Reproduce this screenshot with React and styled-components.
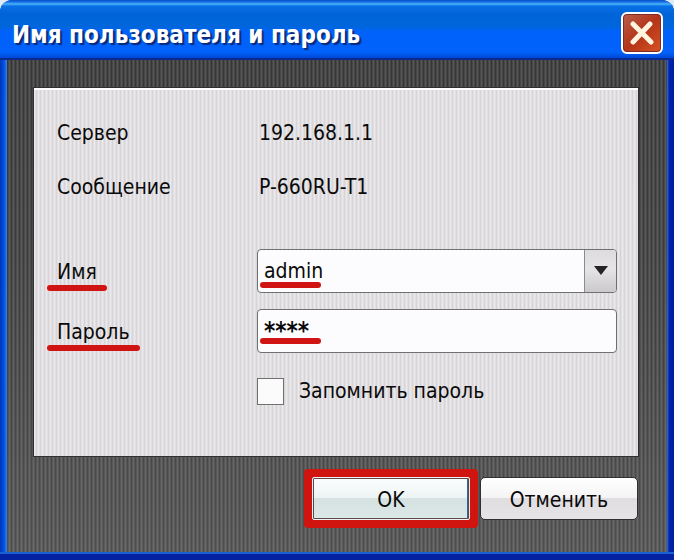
import React, { useState } from "react"
import styled, { createGlobalStyle, css } from "styled-components"

const GlobalStyle = createGlobalStyle`
  * {
    box-sizing: border-box;
  }

  body {
    margin: 0;
    background: #dfeaf8;
    color: #0a0a0a;
    font-family: "DejaVu Sans Condensed", "DejaVu Sans", sans-serif;
    font-size: 21px;
    line-height: 24px;
  }

  button,
  input,
  select {
    margin: 0;
    color: inherit;
    font: inherit;
  }
`

const stripes = (line, base) => css`
  background-image: repeating-linear-gradient(
      90deg,
      transparent 0 1px,
      ${line} 2px 3px,
      transparent 4px
    ),
    ${base};
`

const Window = styled.main`
  display: flex;
  flex-direction: column;
  min-height: 100vh;
  padding: 0 7px 8px;
  border-radius: 12px 12px 0 0;
  background: linear-gradient(
    90deg,
    #0036b8 0,
    #0050e0 4px,
    #2f86f0 7px,
    #0050d8 8px,
    #0050d8 calc(100% - 8px),
    #3472dc calc(100% - 7px),
    #0024b4 calc(100% - 5px),
    #001c98 100%
  );
  box-shadow: inset 0 -6px 0 #0321a0, inset 0 -8px 0 #1a5fd0;
`

const TitleBar = styled.header`
  display: flex;
  align-items: center;
  justify-content: space-between;
  height: 60px;
  margin: 0 -7px;
  padding: 8px 11px 0 12px;
  border-bottom: 2px solid #0a2a90;
  border-radius: 12px 12px 0 0;
  background: linear-gradient(
    180deg,
    #0a50c8 0,
    #1670e8 2px,
    #4cb4fa 4px,
    #0a70e6 6px,
    #0064d8 14px,
    #0066dc 27px,
    #0062fa 31px,
    #0062fa 52px,
    #0048d8 58px
  );
`

const Title = styled.h1`
  margin: 0;
  padding-top: 4px;
  color: white;
  font-size: 24px;
  line-height: 28px;
  text-shadow: 2px 2px 1px #0a2878;
`

const CloseButton = styled.button`
  display: grid;
  place-items: center;
  width: 42px;
  height: 42px;
  padding: 0;
  border: 2px solid white;
  border-radius: 6px;
  background: linear-gradient(135deg, #b8604c 0, #b43418 50%, #d85424 100%);
  box-shadow: inset 0 0 0 1px #7c2c28;
`

const Body = styled.div`
  flex: 1;
  padding: 28px 29px 23px 27px;
  ${stripes(
    "rgba(255, 255, 255, 0.16)",
    "linear-gradient(180deg, #363636, #3c3c3c 40%, #4e4e4e)"
  )}
`

const Panel = styled.div`
  display: grid;
  grid-template-columns: 200px 1fr;
  align-items: center;
  row-gap: 16px;
  padding: 21px 21px 43px 23px;
  border-top: 2px solid white;
  outline: 1px solid #303030;
  ${stripes(
    "rgba(90, 80, 95, 0.13)",
    "linear-gradient(180deg, #ebe9eb, #ebe9eb)"
  )}
`

const Details = styled.dl`
  display: grid;
  grid-template-columns: 200px 1fr;
  grid-column: 1 / -1;
  align-items: center;
  row-gap: 10px;
  margin: 0 0 24px;
`

const Term = styled.dt`
  line-height: 44px;
`

const Value = styled.dd`
  margin: 0;
  padding-left: 2px;
`

const FieldLabel = styled.label`
  padding-top: 2px;
`

const Mark = styled.span`
  position: relative;

  &::after {
    content: "";
    position: absolute;
    top: 25px;
    left: -10px;
    right: -10px;
    height: 6px;
    border-radius: 3px;
    background: #d01414;
  }
`

const Field = styled.div`
  position: relative;
`

const FieldMark = styled.span`
  position: absolute;
  left: 3px;
  bottom: ${props => props.$bottom}px;
  width: 61px;
  height: 6px;
  border-radius: 3px;
  background: #d01414;
  pointer-events: none;
`

const control = css`
  display: block;
  width: 100%;
  height: 44px;
  padding: 0 6px;
  border: 1px solid #707070;
  border-radius: 4px;
  background: #fcfbfd;
`

const Select = styled.select`
  ${control}
  appearance: none;
`

const TextBox = styled.input`
  ${control}
  font-size: 24px;
  font-weight: bold;
`

const Arrow = styled.span`
  position: absolute;
  top: 1px;
  right: 1px;
  bottom: 1px;
  display: grid;
  place-items: center;
  width: 32px;
  border-left: 1px solid #8c8c8c;
  border-radius: 0 3px 3px 0;
  background: linear-gradient(180deg, #dddbdd, #e6e4e6 45%, #cbc9cb);
  pointer-events: none;
`

const Remember = styled.label`
  display: flex;
  grid-column: 2;
  align-items: center;
  gap: 15px;
  min-height: 44px;
`

const Checkbox = styled.input`
  appearance: none;
  width: 27px;
  height: 27px;
  border: 1px solid #707070;
  background: #fbfbfc;

  &:checked {
    box-shadow: inset 0 0 0 6px #fbfbfc;
    background: #303030;
  }
`

const Actions = styled.div`
  display: flex;
  align-items: center;
  justify-content: flex-end;
  gap: 2px;
  margin-top: 13px;
`

const Highlight = styled.div`
  padding: 8px;
  border-radius: 4px;
  background: #d01410;
`

const Button = styled.button`
  display: block;
  width: 158px;
  height: 43px;
  padding: 2px 0 0;
  border: 1px solid ${props => (props.$primary ? "#eef2f4" : "#303030")};
  border-radius: ${props => (props.$primary ? 2 : 5)}px;
  background: ${props =>
    props.$primary
      ? "linear-gradient(180deg, #fcfefe 0, #edf4f4 48%, #d5e2e1 50%, #dce8e6 100%)"
      : "linear-gradient(180deg, #ffffff 0, #f5f4f5 48%, #dfdddf 50%, #e6e4e6 100%)"};
  box-shadow: ${props =>
    props.$primary ? "inset 0 0 0 1px #604848, inset -2px 0 0 #38639c" : "none"};
`

const App = () => {
  const [name, setName] = useState("admin")
  const [password, setPassword] = useState("****")

  return (
    <>
      <GlobalStyle />
      <Window>
        <TitleBar>
          <Title>Имя пользователя и пароль</Title>
          <CloseButton type="button" aria-label="Закрыть">
            <svg width="24" height="24" viewBox="0 0 24 24">
              <path
                d="M3 3L21 21M20 3L3 21"
                fill="none"
                stroke="#fff4e0"
                strokeWidth="5"
                strokeLinecap="round"
              />
            </svg>
          </CloseButton>
        </TitleBar>
        <Body>
          <Panel>
            <Details>
              <Term>Сервер</Term>
              <Value>192.168.1.1</Value>
              <Term>Сообщение</Term>
              <Value>P-660RU-T1</Value>
            </Details>
            <FieldLabel htmlFor="name">
              <Mark>Имя</Mark>
            </FieldLabel>
            <Field>
              <Select
                id="name"
                value={name}
                onChange={e => setName(e.target.value)}
              >
                <option value="admin">admin</option>
              </Select>
              <Arrow>
                <svg width="14" height="10" viewBox="0 0 14 10">
                  <path d="M0 0H14L7 9Z" fill="#242424" />
                </svg>
              </Arrow>
              <FieldMark $bottom={5} />
            </Field>
            <FieldLabel htmlFor="password">
              <Mark>Пароль</Mark>
            </FieldLabel>
            <Field>
              <TextBox
                id="password"
                autoComplete="off"
                value={password}
                onChange={e => setPassword(e.target.value)}
              />
              <FieldMark $bottom={9} />
            </Field>
            <Remember>
              <Checkbox type="checkbox" />
              Запомнить пароль
            </Remember>
          </Panel>
          <Actions>
            <Highlight>
              <Button type="submit" $primary>
                OK
              </Button>
            </Highlight>
            <Button type="button">Отменить</Button>
          </Actions>
        </Body>
      </Window>
    </>
  )
}

export default App
